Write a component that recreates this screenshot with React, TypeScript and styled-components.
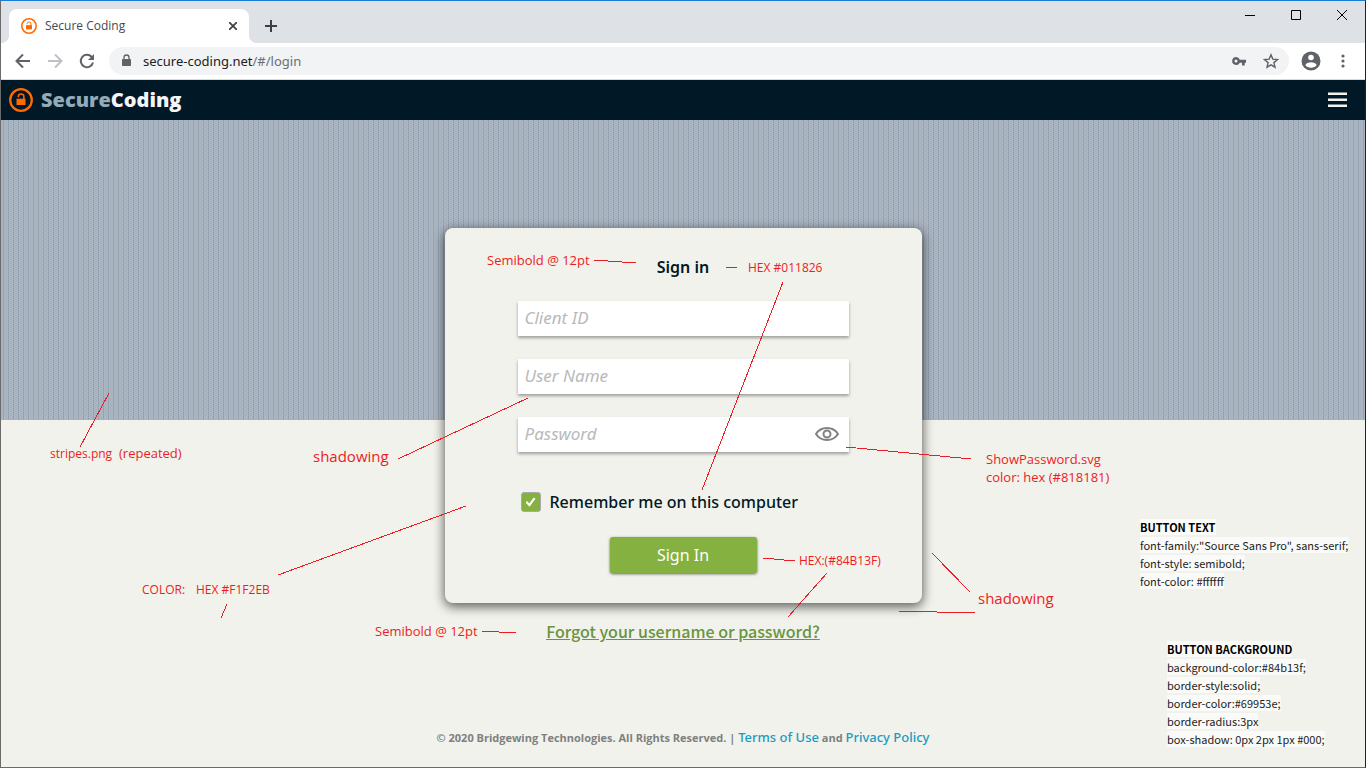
import React, { useState } from "react";
import styled, { createGlobalStyle } from "styled-components";

const OPEN = '"Open Sans", "Noto Sans", sans-serif';
const NOTO = '"Noto Sans", "Open Sans", sans-serif';
const SOURCE = '"Source Sans Pro", "Noto Sans CJK SC", sans-serif';

const Global = createGlobalStyle`
  * { box-sizing: border-box; }
  body { margin: 0; background: #f1f2eb; font-family: ${OPEN}; }
  button { border: 0; padding: 0; background: none; font: inherit; color: inherit; cursor: pointer; }
`;

const Window = styled.div`
  position: relative;
  display: flex;
  flex-direction: column;
  min-height: 100vh;
  overflow: hidden;
  border: 1px solid #6b6b6b;
  border-top-color: #1a7fd4;
  border-right-color: #222;
`;
const TabStrip = styled.div`
  display: flex;
  align-items: flex-start;
  height: 42px;
  padding-left: 8px;
  background: #dee1e6;
`;
const Tab = styled.div`
  position: relative;
  display: flex;
  align-items: center;
  gap: 8px;
  width: 240px;
  height: 34px;
  margin-top: 8px;
  padding: 0 10px 0 12px;
  border-radius: 8px 8px 0 0;
  background: #fff;
  font-size: 12px;
  line-height: 16px;
  color: #45494d;
  &::before, &::after {
    content: "";
    position: absolute;
    bottom: 0;
    width: 8px;
    height: 8px;
  }
  &::before { left: -8px; background: radial-gradient(circle at 0 0, transparent 8px, #fff 8px); }
  &::after { right: -8px; background: radial-gradient(circle at 100% 0, transparent 8px, #fff 8px); }
`;
const TabTitle = styled.span`flex: 1;`;
const IconButton = styled.button<{ $w?: number; $h?: number }>`
  display: flex;
  align-items: center;
  justify-content: center;
  width: ${(p) => p.$w ?? 32}px;
  height: ${(p) => p.$h ?? 32}px;
`;
const NewTab = styled(IconButton)`margin: 9px 0 0 6px;`;
const WindowControls = styled.div`
  display: flex;
  margin-left: auto;
`;
const Toolbar = styled.div`
  display: flex;
  align-items: center;
  height: 37px;
  padding: 0 6px;
  background: #fff;
  border-bottom: 1px solid #d8dadd;
`;
const Omnibox = styled.div`
  display: flex;
  flex: 1;
  align-items: center;
  height: 28px;
  margin: 0 6px;
  padding: 0 2px 0 12px;
  border-radius: 14px;
  background: #f1f3f4;
`;
const Address = styled.span`
  flex: 1;
  margin-left: 11px;
  font-family: ${NOTO};
  font-size: 13px;
  color: #202124;
  span { color: #6b6f74; }
`;
const Header = styled.header`
  display: flex;
  align-items: center;
  justify-content: space-between;
  height: 40px;
  padding: 0 11px 0 8px;
  background: #011826;
`;
const Brand = styled.a`
  display: flex;
  align-items: center;
  gap: 8px;
  font-size: 20px;
  line-height: 40px;
  font-weight: 800;
  color: #f4f4fa;
  text-decoration: none;
  span span { color: #93abb9; }
`;
const Stage = styled.main`
  position: relative;
  display: flex;
  flex: 1;
  flex-direction: column;
  align-items: center;
  padding: 108px 16px 19px;
`;
const Stripes = styled.svg`
  position: absolute;
  top: 0;
  left: 0;
  width: 100%;
  height: 300px;
`;
const Card = styled.form`
  position: relative;
  display: flex;
  flex-direction: column;
  align-items: center;
  width: 477px;
  max-width: 100%;
  padding: 28px 73px 30px;
  border-radius: 8px;
  background: #f1f2eb;
  box-shadow: 0 3px 11px 1px rgba(0, 0, 0, 0.6);
`;
const Title = styled.h1`
  margin: 0 0 23px;
  font: 600 16px/22px ${NOTO};
  color: #011826;
`;
const Field = styled.div`
  position: relative;
  display: flex;
  width: 100%;
  height: 35px;
  margin-bottom: 23px;
`;
const Input = styled.input`
  width: 100%;
  padding: 0 7px 1px;
  border: 0;
  outline: 0;
  background: #fff;
  box-shadow: 0 2px 3px rgba(0, 0, 0, 0.35);
  font: 17px/22px ${NOTO};
  color: #011826;
  &::placeholder { color: #b9b9b9; font-style: italic; opacity: 1; }
`;
const ShowPassword = styled(IconButton)`
  position: absolute;
  top: 1px;
  right: 6px;
`;
const Remember = styled.label`
  display: flex;
  align-items: center;
  align-self: flex-start;
  gap: 9px;
  margin: 16px 0 24px 3px;
  font: 500 16px/22px ${NOTO};
  color: #011826;
`;
const Checkbox = styled.input`
  appearance: none;
  display: grid;
  place-items: center;
  width: 20px;
  height: 20px;
  margin: 0;
  border: 1px solid #a9a9a9;
  border-radius: 3px;
  background: #fff;
  &:checked { background: #84b13f; }
  &:checked::before {
    content: "";
    width: 10px;
    height: 10px;
    background: #fff;
    clip-path: polygon(0 55%, 15% 40%, 38% 65%, 82% 5%, 100% 18%, 40% 98%);
  }
`;
const Submit = styled.button`
  width: 147px;
  height: 36px;
  border-radius: 3px;
  background: #84b13f;
  box-shadow: 0 1px 3px rgba(0, 0, 0, 0.6);
  font: 16px/22px ${NOTO};
  color: #fff;
`;
const Forgot = styled.a`
  position: relative;
  margin-top: 16px;
  font: 500 16px/24px ${SOURCE};
  color: #69953e;
  text-decoration: underline;
`;
const Footer = styled.footer`
  margin-top: auto;
  font-size: 11px;
  line-height: 20px;
  font-weight: 700;
  color: #808080;
  a { font-family: ${NOTO}; font-size: 13px; font-weight: 500; color: #1a9bc0; text-decoration: none; }
`;

/* Review notes pinned over the page, measured from its horizontal centre. */
const Notes = styled.div`
  position: absolute;
  top: -1px;
  left: 50%;
  width: 0;
  pointer-events: none;
`;
const NoteLines = styled.svg`
  position: absolute;
  top: 0;
  left: -683px;
  width: 1366px;
  height: 768px;
  fill: none;
  stroke: #ed1c24;
`;
const Note = styled.div<{ $x: number; $y: number; $size?: number }>`
  position: absolute;
  left: ${(p) => p.$x - 683}px;
  top: ${(p) => p.$y}px;
  font-size: ${(p) => p.$size ?? 12}px;
  line-height: 18px;
  white-space: pre;
  color: #ed1c24;
`;
const Spec = styled(Note)`
  font-family: ${SOURCE};
  color: #222;
  strong { font-weight: 700; color: #000; }
  span { background: #fafaf8; }
`;

const Lock = ({ size }: { size: number }) => (
  <svg width={size} height={size} viewBox="0 0 24 24" fill="none">
    <circle cx="12" cy="12" r="10.800" stroke="#ff6a00" strokeWidth="2.300" />
    <path d="M7.500 10.700h9v6.300h-9z" fill="#ff6a00" />
    <path d="M9.300 9.300V8.500a2.800 2.600 0 0 1 5.600 0V11" stroke="#ff6a00" strokeWidth="1.500" />
  </svg>
);

const notes = [
  { x: 487, y: 251, text: "Semibold @ 12pt", size: 13 },
  { x: 748, y: 259, text: "HEX #011826" },
  { x: 50, y: 445, text: "stripes.png" },
  { x: 119, y: 444, text: "(repeated)", size: 13 },
  { x: 313, y: 447, text: "shadowing", size: 15 },
  { x: 986, y: 450, text: "ShowPassword.svg\ncolor: hex (#818181)", size: 13 },
  { x: 142, y: 581, text: "COLOR:" },
  { x: 196, y: 581, text: "HEX #F1F2EB" },
  { x: 799, y: 552, text: "HEX:(#84B13F)" },
  { x: 978, y: 589, text: "shadowing", size: 15 },
  { x: 375, y: 622, text: "Semibold @ 12pt", size: 13 },
];
const specs = [
  { x: 1140, y: 518, title: "BUTTON TEXT", lines: ['font-family:"Source Sans Pro", sans-serif;', "font-style: semibold;", "font-color: #ffffff"] },
  { x: 1167, y: 640, title: "BUTTON BACKGROUND", lines: ["background-color:#84b13f;", "border-style:solid;", "border-color:#69953e;", "border-radius:3px", "box-shadow: 0px 2px 1px #000;"] },
];

export default function App() {
  const [shown, setShown] = useState(false);
  return (
    <Window>
      <Global />
      <TabStrip>
        <Tab>
          <Lock size={16} />
          <TabTitle>Secure Coding</TabTitle>
          <IconButton $w={12} $h={16} aria-label="Close tab">
            <svg width="8" height="8" stroke="#3c4043" strokeWidth="1.700"><path d="M0 0l8 8M8 0L0 8" /></svg>
          </IconButton>
        </Tab>
        <NewTab aria-label="New tab">
          <svg width="12" height="12" stroke="#3c4043" strokeWidth="2"><path d="M6 0v12M0 6h12" /></svg>
        </NewTab>
        <WindowControls>
          <IconButton $w={46} $h={28} aria-label="Minimize"><svg width="10" height="10" stroke="#000"><path d="M0 5.500h10" /></svg></IconButton>
          <IconButton $w={46} $h={28} aria-label="Maximize"><svg width="10" height="10" stroke="#000" fill="none"><path d="M.5.5h9v9h-9z" /></svg></IconButton>
          <IconButton $w={46} $h={28} aria-label="Close"><svg width="10" height="10" stroke="#000"><path d="M0 0l10 10M10 0L0 10" /></svg></IconButton>
        </WindowControls>
      </TabStrip>
      <Toolbar>
        <IconButton aria-label="Back"><svg width="16" height="16" fill="none" stroke="#5f6368" strokeWidth="2"><path d="M15 8H2M8 1.500L1.500 8 8 14.500" /></svg></IconButton>
        <IconButton aria-label="Forward"><svg width="16" height="16" fill="none" stroke="#bdc1c6" strokeWidth="2"><path d="M1 8h13M8 1.500L14.500 8 8 14.500" /></svg></IconButton>
        <IconButton aria-label="Reload"><svg width="16" height="16" fill="none" stroke="#5f6368" strokeWidth="2"><path d="M14 9.500A6.200 6.200 0 1 1 12.500 3.700L14 5.200" /><path d="M15 1v6H9z" fill="#5f6368" stroke="none" /></svg></IconButton>
        <Omnibox>
          <svg width="11" height="14" fill="none"><path d="M1.500 5.500h8v6h-8z" fill="#5f6368" stroke="#5f6368" /><path d="M3 5V3.500a2.500 2.500 0 0 1 5 0V5" stroke="#5f6368" strokeWidth="1.300" /></svg>
          <Address>secure-coding.net<span>/#/login</span></Address>
          <IconButton aria-label="Passwords"><svg width="14" height="9" fill="#5f6368"><path fillRule="evenodd" d="M4 0a4 4 0 0 1 3.800 2.700H14v3h-1.300V8.500H10V5.700H7.800A4 4 0 1 1 4 0zm0 2.600a1.500 1.500 0 1 0 0 3 1.500 1.500 0 0 0 0-3z" /></svg></IconButton>
          <IconButton aria-label="Bookmark"><svg width="16" height="16" fill="none" stroke="#5f6368" strokeWidth="1.400"><path d="M8 1.800l1.800 4.300 4.700.4-3.600 3.100 1.100 4.600L8 11.800l-4 2.400 1.100-4.600L1.500 6.500l4.700-.4z" /></svg></IconButton>
        </Omnibox>
        <IconButton aria-label="Profile"><svg width="20" height="20"><circle cx="10" cy="10" r="9.500" fill="#5f6368" /><circle cx="10" cy="6.500" r="2.800" fill="#fff" /><path d="M4.300 14c1-2 3.200-2.800 5.700-2.800s4.700.8 5.700 2.800c-1.200 1.800-3.300 2.800-5.700 2.800S5.500 15.800 4.300 14z" fill="#fff" /></svg></IconButton>
        <IconButton aria-label="Menu"><svg width="4" height="14" fill="#5f6368"><circle cx="2" cy="2" r="1.600" /><circle cx="2" cy="7" r="1.600" /><circle cx="2" cy="12" r="1.600" /></svg></IconButton>
      </Toolbar>
      <Header>
        <Brand href="#"><Lock size={24} /><span><span>Secure</span>Coding</span></Brand>
        <IconButton aria-label="Navigation"><svg width="20" height="16" fill="#f1f2eb"><path d="M0 .6h19v2.500H0zM0 6.600h19v2.500H0zM0 12.600h19v2.500H0z" /></svg></IconButton>
      </Header>
      <Stage>
        <Stripes aria-hidden="true">
          <defs>
            <pattern id="stripes" width="5" height="4" patternUnits="userSpaceOnUse">
              <path d="M0 0h5v4H0z" fill="#acb6c2" />
              <path d="M2 0h1v4H2z" fill="#9baab8" />
              <path d="M2 0h1v1H2zM2 2h1v1H2z" fill="#8b9dad" />
              <path d="M0 1h1v1H0zM4 3h1v1H4z" fill="#9eabb8" />
            </pattern>
          </defs>
          <rect width="100%" height="100%" fill="url(#stripes)" />
        </Stripes>
        <Card onSubmit={(e) => e.preventDefault()}>
          <Title>Sign in</Title>
          <Field><Input aria-label="Client ID" placeholder="Client ID" /></Field>
          <Field><Input aria-label="User Name" placeholder="User Name" /></Field>
          <Field>
            <Input aria-label="Password" type={shown ? "text" : "password"} placeholder="Password" />
            <ShowPassword type="button" aria-label="Show password" onClick={() => setShown(!shown)}>
              <svg width="24" height="16" fill="none" stroke="#818181" strokeWidth="2"><path d="M1 8c2.500-4 6.500-6 11-6s8.500 2 11 6c-2.500 4-6.500 6-11 6S3.500 12 1 8z" /><circle cx="12" cy="8" r="3.500" /></svg>
            </ShowPassword>
          </Field>
          <Remember><Checkbox type="checkbox" defaultChecked />Remember me on this computer</Remember>
          <Submit type="submit">Sign In</Submit>
        </Card>
        <Forgot href="#">Forgot your username or password?</Forgot>
        <Footer>© 2020 Bridgewing Technologies. All Rights Reserved. | <a href="#">Terms of Use</a> and <a href="#">Privacy Policy</a></Footer>
      </Stage>
      <Notes>
        <NoteLines viewBox="0 0 1366 768" shapeRendering="crispEdges">
          <path d="M594 260l42 3M726 267.500h11M783 282L702 490M109 393L80 447M398 459l130-61M846 447l125 12M278 575l188-69M227 604l-6 14M763 558l32 3M827 573l-39 44M932 553l38 39M898 611l77 2M482 631l34 2" />
        </NoteLines>
        {notes.map((n, i) => <Note key={i} $x={n.x} $y={n.y} $size={n.size}>{n.text}</Note>)}
        {specs.map((s) => (
          <Spec key={s.title} $x={s.x} $y={s.y} $size={11}>
            <strong><span>{s.title}</span></strong>
            {s.lines.map((l) => <div key={l}><span>{l}</span></div>)}
          </Spec>
        ))}
      </Notes>
    </Window>
  );
}
